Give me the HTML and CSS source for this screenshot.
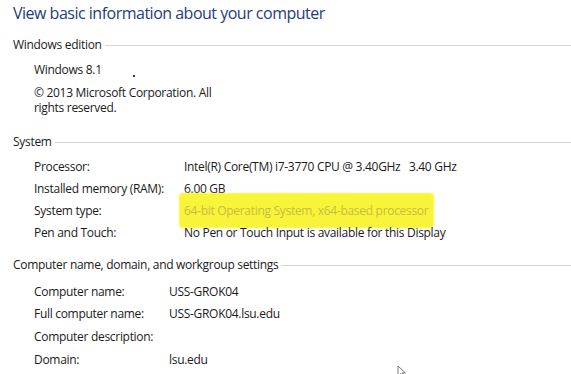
FILE: index.html
```html
<!DOCTYPE html>
<html>
<head>
<meta charset="utf-8">
<link rel="stylesheet" href="styles.css">
</head>
<body>
<div class="page">
  <h1 class="title">View basic information about your computer</h1>

  <div class="section-head"><span>Windows edition</span></div>
  <div class="edition">
    <div class="edition-name">Windows 8.1<span class="speck"></span></div>
    <div class="copyright">© 2013 Microsoft Corporation. All rights reserved.</div>
  </div>

  <div class="section-head head-system"><span>System</span></div>
  <div class="rows rows-system">
    <div class="label">Processor:</div><div class="value">Intel(R) Core(TM) i7-3770 CPU @ 3.40GHz&nbsp;&nbsp; 3.40 GHz</div>
    <div class="label">Installed memory (RAM):</div><div class="value">6.00 GB</div>
    <div class="label">System type:</div><div class="value"><span class="highlight">64-bit Operating System, x64-based processor</span></div>
    <div class="label">Pen and Touch:</div><div class="value">No Pen or Touch Input is available for this Display</div>
  </div>

  <div class="section-head head-computer"><span>Computer name, domain, and workgroup settings</span></div>
  <div class="rows rows-computer">
    <div class="label">Computer name:</div><div class="value">USS-GROK04</div>
    <div class="label">Full computer name:</div><div class="value">USS-GROK04.lsu.edu</div>
    <div class="label">Computer description:</div><div class="value"></div>
    <div class="label">Domain:</div><div class="value">lsu.edu<span class="cursor"><svg width="12" height="14" viewBox="0 0 12 14"><path d="M1 1 L1 11 L3.5 8.5 L5.5 13 L7 12.3 L5 8 L8.5 8 Z" fill="#fff" stroke="#555" stroke-width="0.8"/></svg></span></div>
  </div>
</div>
</body>
</html>
```
FILE: styles.css
```css
html, body {
  margin: 0;
  padding: 0;
  background: #ffffff;
}
body {
  font-family: "Open Sans", "Noto Sans", sans-serif;
  font-size: 12px;
  letter-spacing: -0.3px;
  color: #1a1a1a;
}
.page {
  width: 571px;
  height: 374px;
  overflow: hidden;
  padding: 1px 0 0 13px;
  box-sizing: border-box;
}
.title {
  margin: 0;
  font-weight: normal;
  font-size: 16px;
  letter-spacing: -0.5px;
  line-height: 24px;
  color: #1e3c80;
}
.section-head {
  display: flex;
  align-items: center;
  line-height: 20px;
  margin-top: 10px;
}
.section-head::after {
  content: "";
  flex: 1;
  height: 1px;
  background: #cfd6dc;
  margin-left: 3px;
}
.head-system { margin-top: 17px; }
.head-computer { margin-top: 12px; }
.edition {
  padding-left: 21px;
  margin-top: 5px;
}
.edition-name {
  line-height: 20px;
  position: relative;
}
.speck {
  position: absolute;
  left: 99px;
  top: 15px;
  width: 2px;
  height: 2px;
  background: #333;
}
.copyright {
  width: 185px;
  line-height: 15px;
  margin-top: 5px;
}
.rows {
  display: grid;
  padding-left: 21px;
  grid-auto-rows: 22px;
  align-items: center;
  margin-top: 3px;
}
.rows-system { grid-template-columns: 150px auto; }
.rows-computer { grid-template-columns: 135px auto; grid-auto-rows: 22.6px; margin-top: 5px; }
.value { position: relative; }
.highlight {
  color: #c7bd45;
  background: #f7f43a;
  padding: 8px 5px 8px 4px;
  margin-left: -4px;
  border-radius: 3px;
  box-shadow: 0 0 2px 1px #f7f43a;
}
.cursor {
  position: absolute;
  left: 228px;
  top: 14px;
}
```
